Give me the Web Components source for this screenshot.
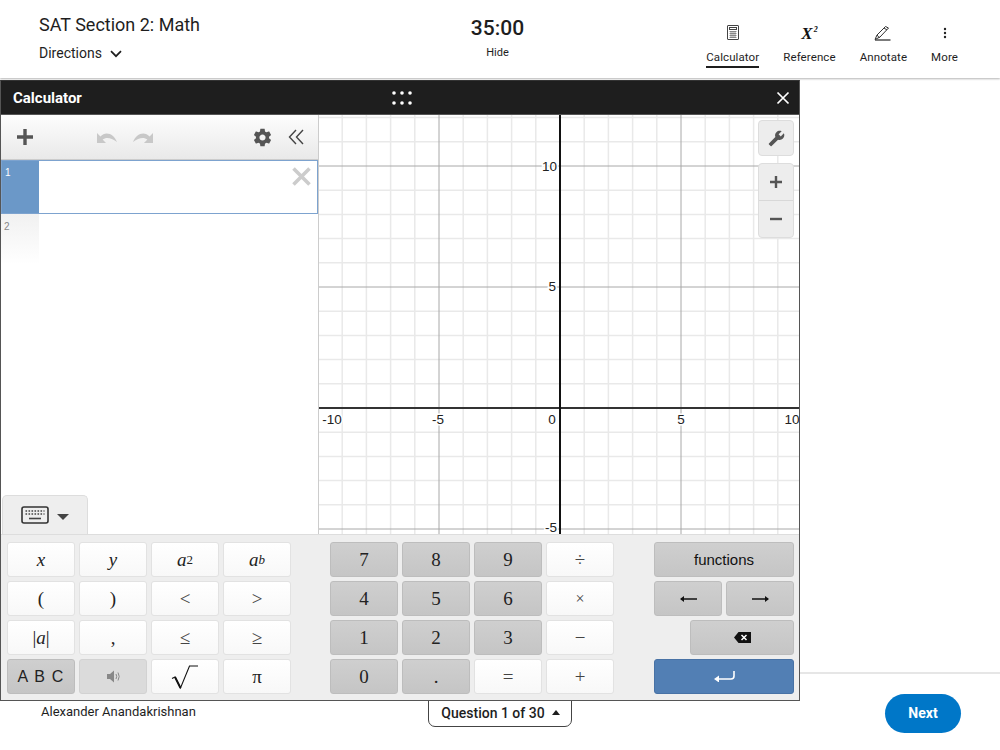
<!DOCTYPE html>
<html lang="en">
<head>
<meta charset="UTF-8">
<title>SAT Section 2: Math</title>
<style>
    html, body { margin: 0; height: 100%; background: #fff; }
    body { font-family: Roboto, "Liberation Sans", sans-serif; color: #1e1e1e; overflow: hidden; }
</style>
<script>
    const ICONS = {
        calculator: `<svg width="14" height="15" viewBox="0 0 14 15" fill="none" stroke="#444" stroke-width="1"><rect x="1.5" y=".5" width="11" height="14" rx=".5"/><rect x="3.5" y="2.5" width="7" height="2"/><path d="M3.5 6.5h7M3.5 8.5h7M3.5 10.5h7M3.5 12.5h7M5 6v7M7 6v7M9 6v7" stroke-width=".8" stroke="#777"/></svg>`,
        pen: `<svg width="18" height="16" viewBox="0 0 18 16" fill="none" stroke="#333" stroke-width="1"><path d="M1 14.5 L3 10 L11.5 1.5 L14.5 3 L6 12 Z M3 10 L5.5 13 M10 3 L13 5"/><path d="M1 15h15.5" stroke-width="1.3"/></svg>`,
        kebab: `<svg width="4" height="12" viewBox="0 0 4 12" fill="#222"><circle cx="2" cy="2" r="1.2"/><circle cx="2" cy="6" r="1.2"/><circle cx="2" cy="10" r="1.2"/></svg>`,
        gear: `<svg width="21" height="21" viewBox="0 0 24 24" fill="#555"><path d="M19.43 12.98c.04-.32.07-.64.07-.98s-.03-.66-.07-.98l2.11-1.65c.19-.15.24-.42.12-.64l-2-3.46c-.12-.22-.39-.3-.61-.22l-2.49 1c-.52-.4-1.08-.73-1.69-.98l-.38-2.65C14.46 2.18 14.25 2 14 2h-4c-.25 0-.46.18-.49.42l-.38 2.65c-.61.25-1.17.59-1.69.98l-2.49-1c-.23-.09-.49 0-.61.22l-2 3.46c-.13.22-.07.49.12.64l2.11 1.65c-.04.32-.07.65-.07.98s.03.66.07.98l-2.11 1.65c-.19.15-.24.42-.12.64l2 3.46c.12.22.39.3.61.22l2.49-1c.52.4 1.08.73 1.69.98l.38 2.65c.03.24.24.42.49.42h4c.25 0 .46-.18.49-.42l.38-2.65c.61-.25 1.17-.59 1.69-.98l2.49 1c.23.09.49 0 .61-.22l2-3.46c.12-.22.07-.49-.12-.64l-2.11-1.65zM12 15.5c-1.93 0-3.5-1.57-3.5-3.5s1.57-3.5 3.5-3.5 3.5 1.57 3.5 3.5-1.57 3.5-3.5 3.5z"/></svg>`,
        undo: `<svg width="22" height="14" viewBox="0 0 22 14" fill="#c8c8c8"><path d="M1 3 V13 H10 L6.6 9.6 C10 6.8 15 7.4 21 12 C18 4 10 .5 4.4 6.4 Z"/></svg>`,
        wrench: `<svg width="17" height="17" viewBox="0 0 24 24" fill="#555" style="transform:scaleX(-1)"><path d="M22.7 19l-9.1-9.1c.9-2.3.4-5-1.5-6.9-2-2-5-2.4-7.4-1.3L9 6 6 9 1.6 4.7C.4 7.1.9 10.1 2.9 12.1c1.9 1.9 4.6 2.4 6.9 1.5l9.1 9.1c.4.4 1 .4 1.4 0l2.3-2.3c.5-.4.5-1.1.1-1.4z"/></svg>`,
        keyboard: `<svg width="28" height="18" viewBox="0 0 28 18"><rect x="1" y="1" width="26" height="16" rx="2" fill="#eee" stroke="#333" stroke-width="1.6"/><path d="M4.5 5h19M4.5 8h19" stroke="#444" stroke-width="1.6" stroke-dasharray="1.6 1.4"/><path d="M8 12.5h12" stroke="#444" stroke-width="1.6"/></svg>`,
        speaker: `<svg width="15" height="13" viewBox="0 0 15 13" fill="none"><path d="M1 4h3l4-3.5v12L4 9H1z" fill="#888"/><path d="M10 4q1.4 2.5 0 5M12 2.5q2.4 4 0 8" stroke="#888" stroke-width="1"/></svg>`,
        sqrt: `<svg width="28" height="26" viewBox="0 0 28 26" fill="none" stroke="#111"><path d="M1 14.5 L4 13 L9.5 24 L18.5 2 H27" stroke-width="1.1"/><path d="M4 13 L9.5 24" stroke-width="2"/></svg>`,
        left: `<svg width="17" height="8" viewBox="0 0 17 8"><path d="M1 4h16" stroke="#111" stroke-width="1.5"/><path d="M0 4l4-3v6z" fill="#111"/></svg>`,
        right: `<svg width="17" height="8" viewBox="0 0 17 8"><path d="M0 4h16" stroke="#111" stroke-width="1.5"/><path d="M17 4l-4-3v6z" fill="#111"/></svg>`,
        backspace: `<svg width="17" height="11" viewBox="0 0 17 11"><path d="M4.5 0H17v11H4.5L0 5.5z" fill="#111"/><path d="M7.5 3l5 5M12.5 3l-5 5" stroke="#fff" stroke-width="1.5"/></svg>`,
        enter: `<svg width="21" height="11" viewBox="0 0 21 11" fill="none"><path d="M20 0v5q0 3-3 3H3" stroke="#fff" stroke-width="1.6"/><path d="M0 8l5-3.5v7z" fill="#fff"/></svg>`
    };

    class SatTool extends HTMLElement {
        constructor() {
            super().attachShadow({mode: 'open'});
            this.shadowRoot.innerHTML = `
                <style>
                    :host { display: flex; flex-direction: column; align-items: center; font-size: 11.5px; color: #1e1e1e; }
                    .ico { height: 20px; display: flex; align-items: center; justify-content: center; }
                    .lbl { margin-top: 6px; line-height: 15px; padding-bottom: 1px; border-bottom: 2px solid transparent; letter-spacing: .1px; }
                    :host([active]) .lbl { border-bottom-color: #1e1e1e; }
                </style>
                <div class="ico"><slot name="icon"></slot></div>
                <div class="lbl"><slot></slot></div>`;
        }
    }
    customElements.define('sat-tool', SatTool);

    class SatHeader extends HTMLElement {
        constructor() {
            super().attachShadow({mode: 'open'});
            this.shadowRoot.innerHTML = `
                <style>
                    :host { display: grid; grid-template-columns: 1fr auto 1fr; height: 78px; box-sizing: border-box; padding: 0 42px 0 39px; background: #fff; box-shadow: 0 1px 2px rgba(0,0,0,.3); color: #1e1e1e; }
                    h1 { margin: 14px 0 0; font: 400 18px/22px Roboto, sans-serif; }
                    .dir { margin-top: 9px; display: flex; align-items: center; gap: 8px; font-size: 14px; line-height: 17px; }
                    .mid { text-align: center; margin-left: -2px; }
                    .time { margin-top: 15px; font-size: 21px; line-height: 26px; font-weight: 500; }
                    .hide { margin-top: 5px; font-size: 11px; line-height: 13px; }
                    .tools { justify-self: end; display: flex; gap: 24px; padding-top: 24px; }
                    .x { font: italic 700 17px/20px "Liberation Serif", serif; color: #111; }
                    .x sup { font-size: 8px; line-height: 0; margin-left: 1px; vertical-align: 7px; }
                </style>
                <div>
                    <h1>SAT Section 2: Math</h1>
                    <div class="dir">Directions
                        <svg width="12" height="8" viewBox="0 0 12 8" fill="none" stroke="#1e1e1e" stroke-width="1.7"><path d="M1 1.2l5 5 5-5"/></svg>
                    </div>
                </div>
                <div class="mid">
                    <div class="time">35:00</div>
                    <div class="hide">Hide</div>
                </div>
                <div class="tools">
                    <sat-tool active><span slot="icon">${ICONS.calculator}</span>Calculator</sat-tool>
                    <sat-tool><span slot="icon" class="x">X<sup>2</sup></span>Reference</sat-tool>
                    <sat-tool><span slot="icon">${ICONS.pen}</span>Annotate</sat-tool>
                    <sat-tool><span slot="icon">${ICONS.kebab}</span>More</sat-tool>
                </div>`;
        }
    }
    customElements.define('sat-header', SatHeader);

    class SatFooter extends HTMLElement {
        constructor() {
            super().attachShadow({mode: 'open'});
            this.shadowRoot.innerHTML = `
                <style>
                    :host { display: grid; grid-template-columns: 1fr auto 1fr; height: 78px; box-sizing: border-box; padding: 20px 39px 0 41px; border-top: 2px solid #e6e6e6; background: #fff; color: #1e1e1e; }
                    .name { font-size: 13px; line-height: 16px; padding-top: 10px; }
                    .q { box-sizing: border-box; height: 33px; margin-left: -2px; padding: 10px 11px 0 12px; display: flex; gap: 7px; align-items: flex-start; border: 1px solid #444; border-radius: 0 0 7px 7px; font-size: 14px; line-height: 17px; font-weight: 500; }
                    .tri { width: 0; height: 0; margin-top: 5px; border: 4.5px solid transparent; border-top: 0; border-bottom: 5px solid #1e1e1e; }
                    .next { justify-self: end; width: 76px; height: 39px; border-radius: 20px; background: #0077c8; color: #fff; font-size: 14px; font-weight: 700; line-height: 39px; text-align: center; }
                </style>
                <div class="name">Alexander Anandakrishnan</div>
                <div class="q">Question 1 of 30<span class="tri"></span></div>
                <div class="next">Next</div>`;
        }
    }
    customElements.define('sat-footer', SatFooter);

    class CalcKey extends HTMLElement {
        constructor() {
            super().attachShadow({mode: 'open'});
            this.shadowRoot.innerHTML = `
                <style>
                    :host { display: flex; align-items: center; justify-content: center; box-sizing: border-box; height: 35px; border: 1px solid #e2e2e2; border-radius: 3px; background: linear-gradient(#fff, #f8f8f8); color: #222; font: 16px/1 "Liberation Serif", serif; }
                    :host([tone=dark]) { background: linear-gradient(#cfcfcf, #c5c5c5); border-color: #bdbdbd; }
                    :host([tone=mute]) { background: #dbdbdb; border-color: #d2d2d2; }
                    :host([tone=blue]) { background: #527fb4; border-color: #4872a5; }
                    :host([sans]) { font-family: "Liberation Sans", sans-serif; }
                </style>
                <slot></slot>`;
        }
    }
    customElements.define('calc-key', CalcKey);

    class CalcKeypad extends HTMLElement {
        constructor() {
            super().attachShadow({mode: 'open'});
            this.shadowRoot.innerHTML = `
                <style>
                    :host { display: flex; height: 166px; box-sizing: border-box; padding: 7px 5px 7px 6px; background: #eee; border-top: 1px solid #ddd; }
                    .g { display: grid; grid-template-columns: repeat(4, 68px); grid-auto-rows: 35px; gap: 4px; }
                    .g + .g { margin-left: 39px; }
                    .fn { grid-template-columns: repeat(4, 32px); margin-left: 40px !important; }
                    .w4 { grid-column: span 4; }
                    .w2 { grid-column: span 2; }
                    .w3 { grid-column: 2 / span 3; margin-left: 0; }
                    i { font-style: italic; }
                    sup { font-size: 13px; line-height: 0; vertical-align: 8px; }
                    .big { font-size: 19px; }
                    .lg { font-size: 19px; color: #444; }
                </style>
                <div class="g">
                    <calc-key class="big"><i>x</i></calc-key>
                    <calc-key class="big"><i>y</i></calc-key>
                    <calc-key class="big"><i>a</i><sup>2</sup></calc-key>
                    <calc-key class="big"><i>a</i><sup><i>b</i></sup></calc-key>
                    <calc-key class="big">(</calc-key>
                    <calc-key class="big">)</calc-key>
                    <calc-key class="lg">&lt;</calc-key>
                    <calc-key class="lg">&gt;</calc-key>
                    <calc-key class="big">|<i>a</i>|</calc-key>
                    <calc-key class="big">,</calc-key>
                    <calc-key class="lg">≤</calc-key>
                    <calc-key class="lg">≥</calc-key>
                    <calc-key tone="dark" sans style="font-size:16px;letter-spacing:1.2px">A B C</calc-key>
                    <calc-key tone="mute">${ICONS.speaker}</calc-key>
                    <calc-key>${ICONS.sqrt}</calc-key>
                    <calc-key class="big">π</calc-key>
                </div>
                <div class="g">
                    <calc-key tone="dark" class="big">7</calc-key>
                    <calc-key tone="dark" class="big">8</calc-key>
                    <calc-key tone="dark" class="big">9</calc-key>
                    <calc-key class="lg">÷</calc-key>
                    <calc-key tone="dark" class="big">4</calc-key>
                    <calc-key tone="dark" class="big">5</calc-key>
                    <calc-key tone="dark" class="big">6</calc-key>
                    <calc-key style="color:#444">×</calc-key>
                    <calc-key tone="dark" class="big">1</calc-key>
                    <calc-key tone="dark" class="big">2</calc-key>
                    <calc-key tone="dark" class="big">3</calc-key>
                    <calc-key class="lg">−</calc-key>
                    <calc-key tone="dark" class="big">0</calc-key>
                    <calc-key tone="dark" class="big">.</calc-key>
                    <calc-key class="lg">=</calc-key>
                    <calc-key class="lg">+</calc-key>
                </div>
                <div class="g fn">
                    <calc-key tone="dark" sans class="w4" style="font-size:15px;color:#111">functions</calc-key>
                    <calc-key tone="dark" class="w2">${ICONS.left}</calc-key>
                    <calc-key tone="dark" class="w2">${ICONS.right}</calc-key>
                    <calc-key tone="dark" class="w3" style="margin-left:0">${ICONS.backspace}</calc-key>
                    <calc-key tone="blue" class="w4">${ICONS.enter}</calc-key>
                </div>`;
        }
    }
    customElements.define('calc-keypad', CalcKeypad);

    class CalcExpressions extends HTMLElement {
        constructor() {
            super().attachShadow({mode: 'open'});
            this.shadowRoot.innerHTML = `
                <style>
                    :host { display: flex; flex-direction: column; width: 317px; flex: none; background: #fff; border-right: 1px solid #ccc; box-sizing: content-box; font-family: "Liberation Sans", sans-serif; }
                    .bar { height: 44px; flex: none; display: flex; align-items: center; padding: 0 14px 0 15px; background: linear-gradient(#fdfdfd, #e9e9e9); border-bottom: 1px solid #ccc; }
                    .undo { margin-left: 62px; display: flex; gap: 14px; }
                    .undo svg + svg { transform: scaleX(-1); }
                    .gear { margin-left: auto; display: flex; }
                    .rows { flex: none; }
                    .row { display: flex; }
                    .active { height: 54px; box-sizing: border-box; border: 1px solid #7da3cf; }
                    .active .num { width: 37px; background: #6b98c8; color: #fff; }
                    .num { box-sizing: border-box; padding: 6px 3px; font-size: 10px; line-height: 12px; }
                    .active .box { flex: 1; display: flex; justify-content: flex-end; padding: 6px 6px 0 0; }
                    .next { height: 50px; }
                    .next .num { width: 38px; color: #888; background: linear-gradient(#f1f1f1, #fff); padding: 7px 3px; }
                    .tab { margin-top: auto; width: 86px; height: 39px; box-sizing: border-box; margin-left: 1px; display: flex; align-items: center; justify-content: center; gap: 8px; background: #eee; border: 1px solid #ddd; border-bottom: 0; border-radius: 5px 5px 0 0; }
                    .tri { width: 0; height: 0; margin-top: 3px; border: 6px solid transparent; border-bottom: 0; border-top: 6px solid #444; }
                </style>
                <div class="bar">
                    <svg width="18" height="18" viewBox="0 0 18 18"><path d="M9 1v16M1 9h16" stroke="#555" stroke-width="3.4"/></svg>
                    <div class="undo">${ICONS.undo}${ICONS.undo}</div>
                    <div class="gear">${ICONS.gear}</div>
                    <svg style="margin-left:15px" width="16" height="16" viewBox="0 0 16 16" fill="none" stroke="#444" stroke-width="1.4"><path d="M8 1L1.5 8 8 15M15 1L8.5 8 15 15"/></svg>
                </div>
                <div class="rows">
                    <div class="row active">
                        <div class="num">1</div>
                        <div class="box"><svg width="19" height="19" viewBox="0 0 19 19"><path d="M1.5 1.5l16 16M17.5 1.5l-16 16" stroke="#ccc" stroke-width="3.6"/></svg></div>
                    </div>
                    <div class="row next"><div class="num">2</div></div>
                </div>
                <div class="tab">${ICONS.keyboard}<span class="tri"></span></div>`;
        }
    }
    customElements.define('calc-expressions', CalcExpressions);

    class CalcGraph extends HTMLElement {
        constructor() {
            super().attachShadow({mode: 'open'});
            // origin and scale in local px of the 481x418 pane
            const ox = 241, oy = 293, unit = 24.2, W = 481, H = 419;
            let minor = '', major = '';
            for (let i = -12; i <= 12; i++) {
                const x = ox + i * unit, y = oy + i * unit;
                if (i % 5) {
                    minor += `M${x} 0V${H}`;
                    if (y > 0 && y < H) minor += `M0 ${y}H${W}`;
                } else if (i) {
                    major += `M${x} 0V${H}`;
                    if (y > 0 && y < H) major += `M0 ${y}H${W}`;
                }
            }
            const lbl = (x, y, t, a) => `<text x="${x}" y="${y}" text-anchor="${a || 'middle'}">${t}</text>`;
            this.shadowRoot.innerHTML = `
                <style>
                    :host { display: block; position: relative; flex: 1; overflow: hidden; background: #fff; }
                    svg.plot { display: block; }
                    text { font: 13.5px "Liberation Sans", sans-serif; fill: #222; paint-order: stroke; stroke: #fff; stroke-width: 3px; }
                    .tools { position: absolute; top: 5px; right: 5px; width: 36px; display: flex; flex-direction: column; gap: 7px; }
                    .btn { height: 36px; box-sizing: border-box; display: flex; align-items: center; justify-content: center; background: #ededed; border: 1px solid #ddd; border-radius: 4px; }
                    .zoom { display: flex; flex-direction: column; border: 1px solid #ddd; border-radius: 4px; background: #ededed; }
                    .zoom div { height: 36px; display: flex; align-items: center; justify-content: center; }
                    .zoom div + div { border-top: 1px solid #d8d8d8; }
                </style>
                <svg class="plot" width="${W}" height="${H}" viewBox="0 0 ${W} ${H}">
                    <path d="${minor}" stroke="#e9e9e9" stroke-width="1.5" fill="none"/>
                    <path d="${major}" stroke="#a8a8a8" stroke-width="1" fill="none"/>
                    <path d="M0 ${oy}H${W}" stroke="#333" stroke-width="2"/>
                    <path d="M${ox} 0V${H}" stroke="#111" stroke-width="2"/>
                    ${lbl(ox - 3, oy - 237, '10', 'end')}
                    ${lbl(ox - 4, oy - 117, '5', 'end')}
                    ${lbl(ox - 3, oy + 124, '-5', 'end')}
                    ${lbl(13, oy + 16, '-10')}
                    ${lbl(119, oy + 16, '-5')}
                    ${lbl(ox - 8, oy + 16, '0')}
                    ${lbl(362, oy + 16, '5')}
                    ${lbl(473, oy + 16, '10')}
                </svg>
                <div class="tools">
                    <div class="btn">${ICONS.wrench}</div>
                    <div class="zoom">
                        <div><svg width="14" height="14" viewBox="0 0 14 14"><path d="M7 1v12M1 7h12" stroke="#555" stroke-width="2.4"/></svg></div>
                        <div><svg width="14" height="4" viewBox="0 0 14 4"><path d="M1 2h12" stroke="#555" stroke-width="2.4"/></svg></div>
                    </div>
                </div>`;
        }
    }
    customElements.define('calc-graph', CalcGraph);

    class CalcWindow extends HTMLElement {
        constructor() {
            super().attachShadow({mode: 'open'});
            this.shadowRoot.innerHTML = `
                <style>
                    :host { position: absolute; left: 0; top: 80px; width: 800px; height: 621px; box-sizing: border-box; display: flex; flex-direction: column; background: #fff; border: 1px solid #555; border-top: 1px solid #333; z-index: 2; }
                    .title { height: 33px; flex: none; display: grid; grid-template-columns: 1fr auto 1fr; align-items: center; padding: 0 9px 0 12px; background: #1e1e1e; color: #fff; font: 700 15px Roboto, sans-serif; border-bottom: 1px solid #555; }
                    .x { justify-self: end; display: flex; }
                    .body { flex: 1; display: flex; min-height: 0; }
                </style>
                <div class="title">
                    <span>Calculator</span>
                    <svg width="20" height="14" viewBox="0 0 20 14" fill="#fff"><circle cx="2" cy="2" r="1.8"/><circle cx="10" cy="2" r="1.8"/><circle cx="18" cy="2" r="1.8"/><circle cx="2" cy="12" r="1.8"/><circle cx="10" cy="12" r="1.8"/><circle cx="18" cy="12" r="1.8"/></svg>
                    <span class="x"><svg width="14" height="14" viewBox="0 0 14 14"><path d="M1.5 1.5l11 11M12.5 1.5l-11 11" stroke="#fff" stroke-width="1.7"/></svg></span>
                </div>
                <div class="body">
                    <calc-expressions></calc-expressions>
                    <calc-graph></calc-graph>
                </div>
                <calc-keypad></calc-keypad>`;
        }
    }
    customElements.define('calc-window', CalcWindow);

    class SatApp extends HTMLElement {
        constructor() {
            super().attachShadow({mode: 'open'});
            this.shadowRoot.innerHTML = `
                <style>
                    :host { display: flex; flex-direction: column; height: 750px; position: relative; overflow: hidden; }
                    .main { flex: 1; }
                </style>
                <sat-header></sat-header>
                <div class="main"></div>
                <sat-footer></sat-footer>
                <calc-window></calc-window>`;
        }
    }
    customElements.define('sat-app', SatApp);
</script>
</head>
<body>
    <sat-app></sat-app>
</body>
</html>
